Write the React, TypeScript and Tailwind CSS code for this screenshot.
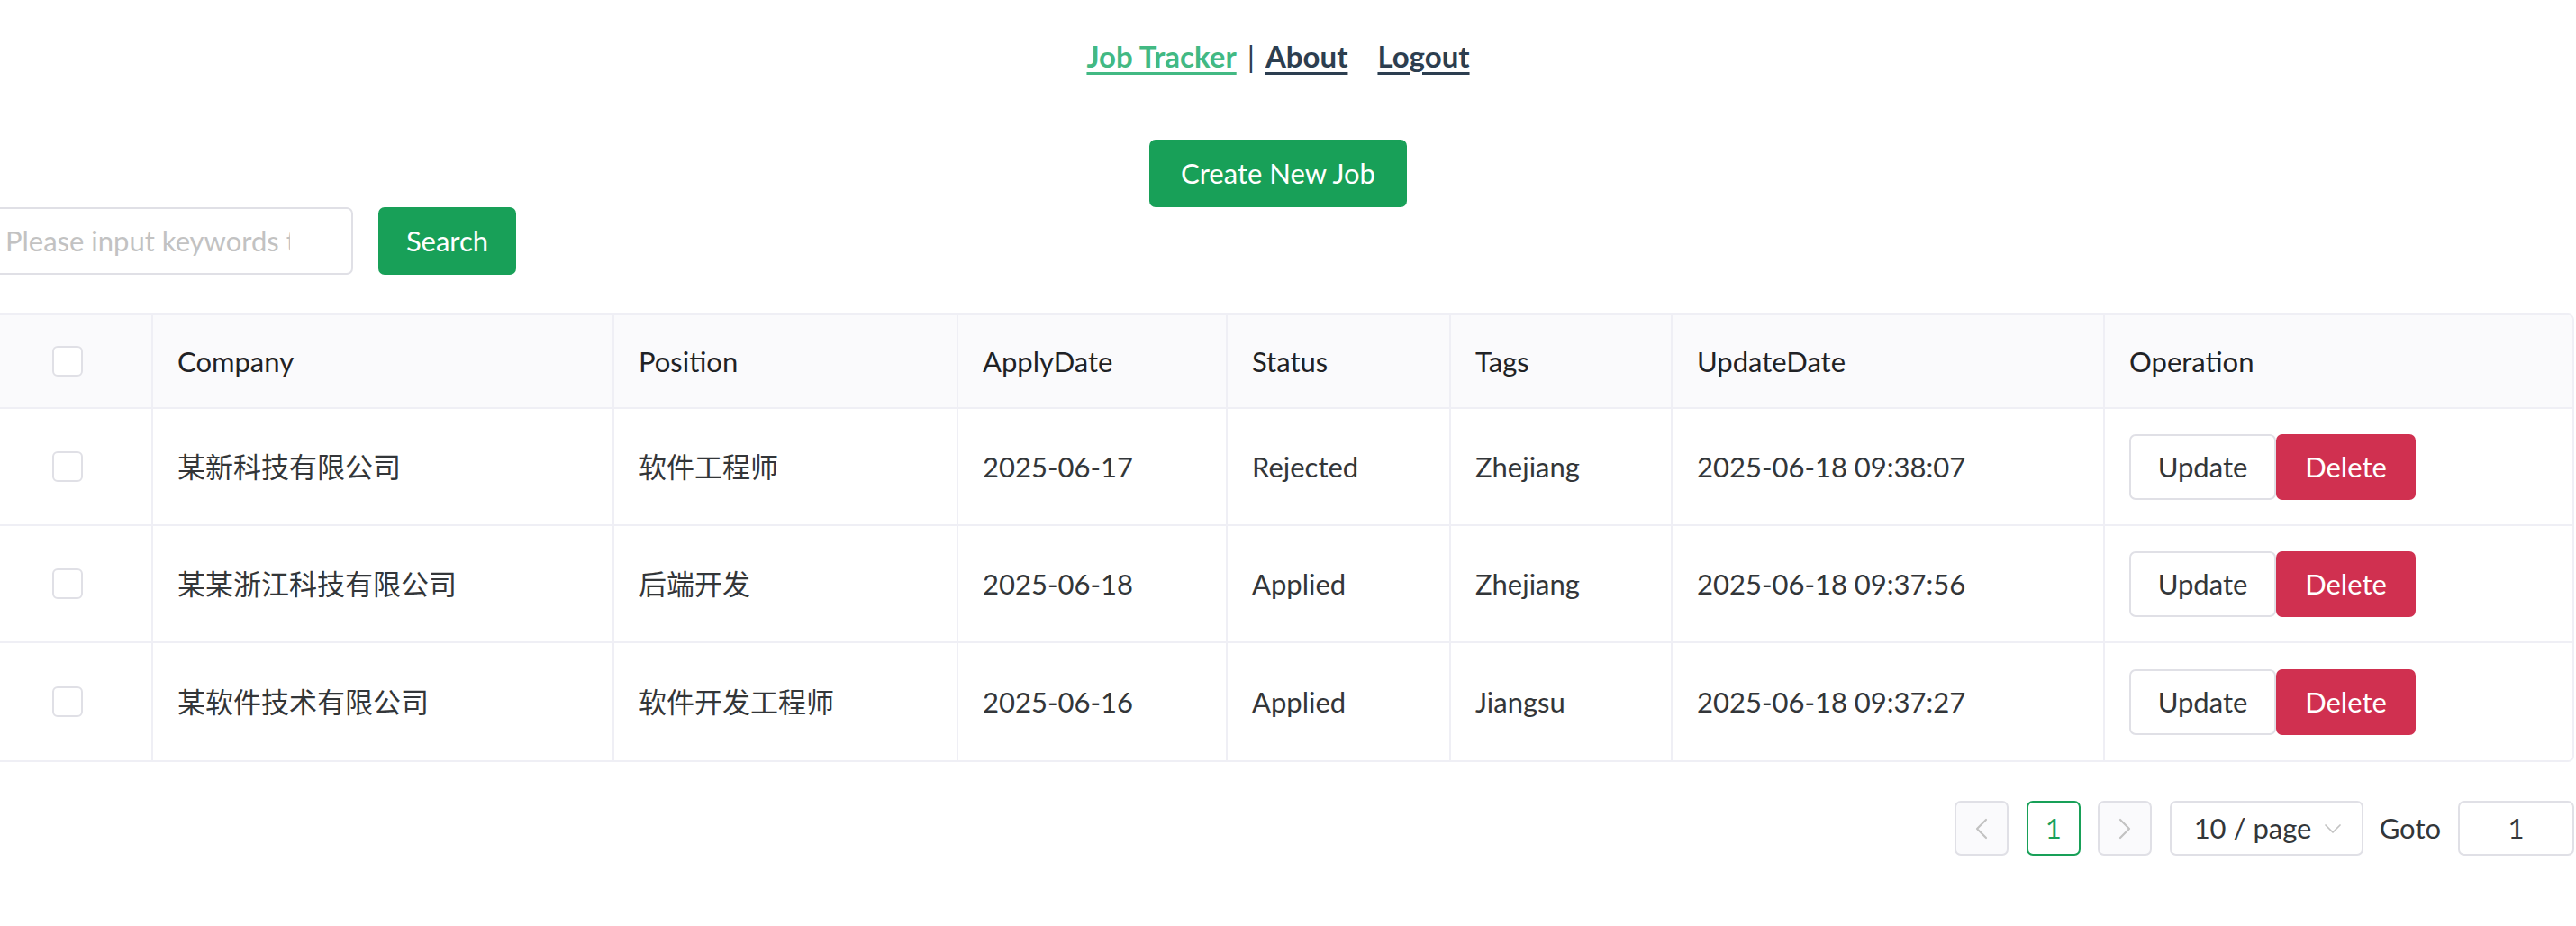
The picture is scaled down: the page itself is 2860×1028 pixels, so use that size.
import React from 'react';
import { ChevronLeft, ChevronRight, ChevronDown } from 'lucide-react';

type Job = {
  company: string;
  position: string;
  applyDate: string;
  status: string;
  tags: string;
  updateDate: string;
};

const jobs: Job[] = [
  { company: '某新科技有限公司', position: '软件工程师', applyDate: '2025-06-17', status: 'Rejected', tags: 'Zhejiang', updateDate: '2025-06-18 09:38:07' },
  { company: '某某浙江科技有限公司', position: '后端开发', applyDate: '2025-06-18', status: 'Applied', tags: 'Zhejiang', updateDate: '2025-06-18 09:37:56' },
  { company: '某软件技术有限公司', position: '软件开发工程师', applyDate: '2025-06-16', status: 'Applied', tags: 'Jiangsu', updateDate: '2025-06-18 09:37:27' },
];

const gridCols = 'grid grid-cols-[186px_512px_382px_299px_248px_246px_480px_1fr]';

const Checkbox: React.FC = () => (
  <div className="w-[34px] h-[34px] rounded-[6px] border-2 border-[#e0e0e6] bg-white" />
);

const App: React.FC = () => {
  return (
    <div className="min-h-screen bg-white text-[#333639] font-[Lato,'Noto_Sans_CJK_SC',sans-serif]">
      <div className="ml-[-20px] w-[2878px]">
        {/* Nav */}
        <nav className="pt-[38px] flex justify-center items-center text-[33px] leading-[48px] font-bold text-[#2c3e50]">
          <a href="#" className="underline decoration-[3px] underline-offset-[5px] text-[#42b983]">Job Tracker</a>
          <span className="mx-[12px] font-normal">|</span>
          <a href="#" className="underline decoration-[3px] underline-offset-[5px]">About</a>
          <a href="#" className="ml-[33px] underline decoration-[3px] underline-offset-[5px]">Logout</a>
        </nav>

        {/* Create */}
        <div className="mt-[69px] flex justify-center">
          <button className="w-[286px] h-[75px] rounded-[7px] bg-[#18a058] text-white text-[31px]">
            Create New Job
          </button>
        </div>

        {/* Search */}
        <div className="flex items-center gap-[28px]">
          <div className="w-[412px] h-[75px] rounded-[7px] border-2 border-[#e0e0e6] flex items-center pl-[24px] pr-[68px] overflow-hidden">
            <input
              className="w-full outline-none bg-transparent text-[31px] placeholder:text-[#c2c2c2]"
              placeholder="Please input keywords to search"
            />
          </div>
          <button className="w-[153px] h-[75px] rounded-[7px] bg-[#18a058] text-white text-[31px]">Search</button>
        </div>

        {/* Table */}
        <div className="mt-[43px] rounded-[7px] border-2 border-[#efeff5] overflow-hidden text-[31px]">
          <div className={`${gridCols} h-[104px] bg-[#fafafc] border-b-2 border-[#efeff5] text-[#1f2225]`}>
            <div className="flex items-center justify-center"><Checkbox /></div>
            {['Company', 'Position', 'ApplyDate', 'Status', 'Tags', 'UpdateDate', 'Operation'].map((h) => (
              <div key={h} className="flex items-center px-[27px] border-l-2 border-[#efeff5]">{h}</div>
            ))}
          </div>
          {jobs.map((job, i) => (
            <div
              key={job.updateDate}
              className={`${gridCols} h-[130px] bg-white ${i < jobs.length - 1 ? 'border-b-2 border-[#efeff5]' : ''}`}
            >
              <div className="flex items-center justify-center"><Checkbox /></div>
              <div className="flex items-center px-[27px] border-l-2 border-[#efeff5]">{job.company}</div>
              <div className="flex items-center px-[27px] border-l-2 border-[#efeff5]">{job.position}</div>
              <div className="flex items-center px-[27px] border-l-2 border-[#efeff5]">{job.applyDate}</div>
              <div className="flex items-center px-[27px] border-l-2 border-[#efeff5]">{job.status}</div>
              <div className="flex items-center px-[27px] border-l-2 border-[#efeff5]">{job.tags}</div>
              <div className="flex items-center px-[27px] border-l-2 border-[#efeff5]">{job.updateDate}</div>
              <div className="flex items-center px-[27px] border-l-2 border-[#efeff5]">
                <button className="w-[163px] h-[73px] rounded-[7px] border-2 border-[#e0e0e6] bg-white text-[#333639]">Update</button>
                <button className="w-[155px] h-[73px] rounded-[7px] bg-[#d03050] text-white">Delete</button>
              </div>
            </div>
          ))}
        </div>

        {/* Pagination */}
        <div className="mt-[43px] flex justify-end items-center text-[31px]">
          <div className="w-[60px] h-[61px] rounded-[7px] border-2 border-[#e0e0e6] bg-[#fafafc] flex items-center justify-center text-[#c2c2c2]">
            <ChevronLeft size={40} strokeWidth={1.3} />
          </div>
          <div className="ml-[20px] w-[60px] h-[61px] rounded-[7px] border-2 border-[#18a058] flex items-center justify-center text-[#18a058]">
            1
          </div>
          <div className="ml-[19px] w-[60px] h-[61px] rounded-[7px] border-2 border-[#e0e0e6] bg-[#fafafc] flex items-center justify-center text-[#c2c2c2]">
            <ChevronRight size={40} strokeWidth={1.3} />
          </div>
          <div className="ml-[20px] w-[215px] h-[61px] rounded-[7px] border-2 border-[#e0e0e6] flex items-center justify-between pl-[25px] pr-[16px]">
            <span>10 / page</span>
            <ChevronDown size={32} strokeWidth={1.3} className="text-[#c2c2c2]" />
          </div>
          <span className="ml-[18px]">Goto</span>
          <div className="ml-[19px] w-[129px] h-[61px] rounded-[7px] border-2 border-[#e0e0e6] flex items-center justify-center">
            1
          </div>
        </div>
      </div>
    </div>
  );
};

export default App;
